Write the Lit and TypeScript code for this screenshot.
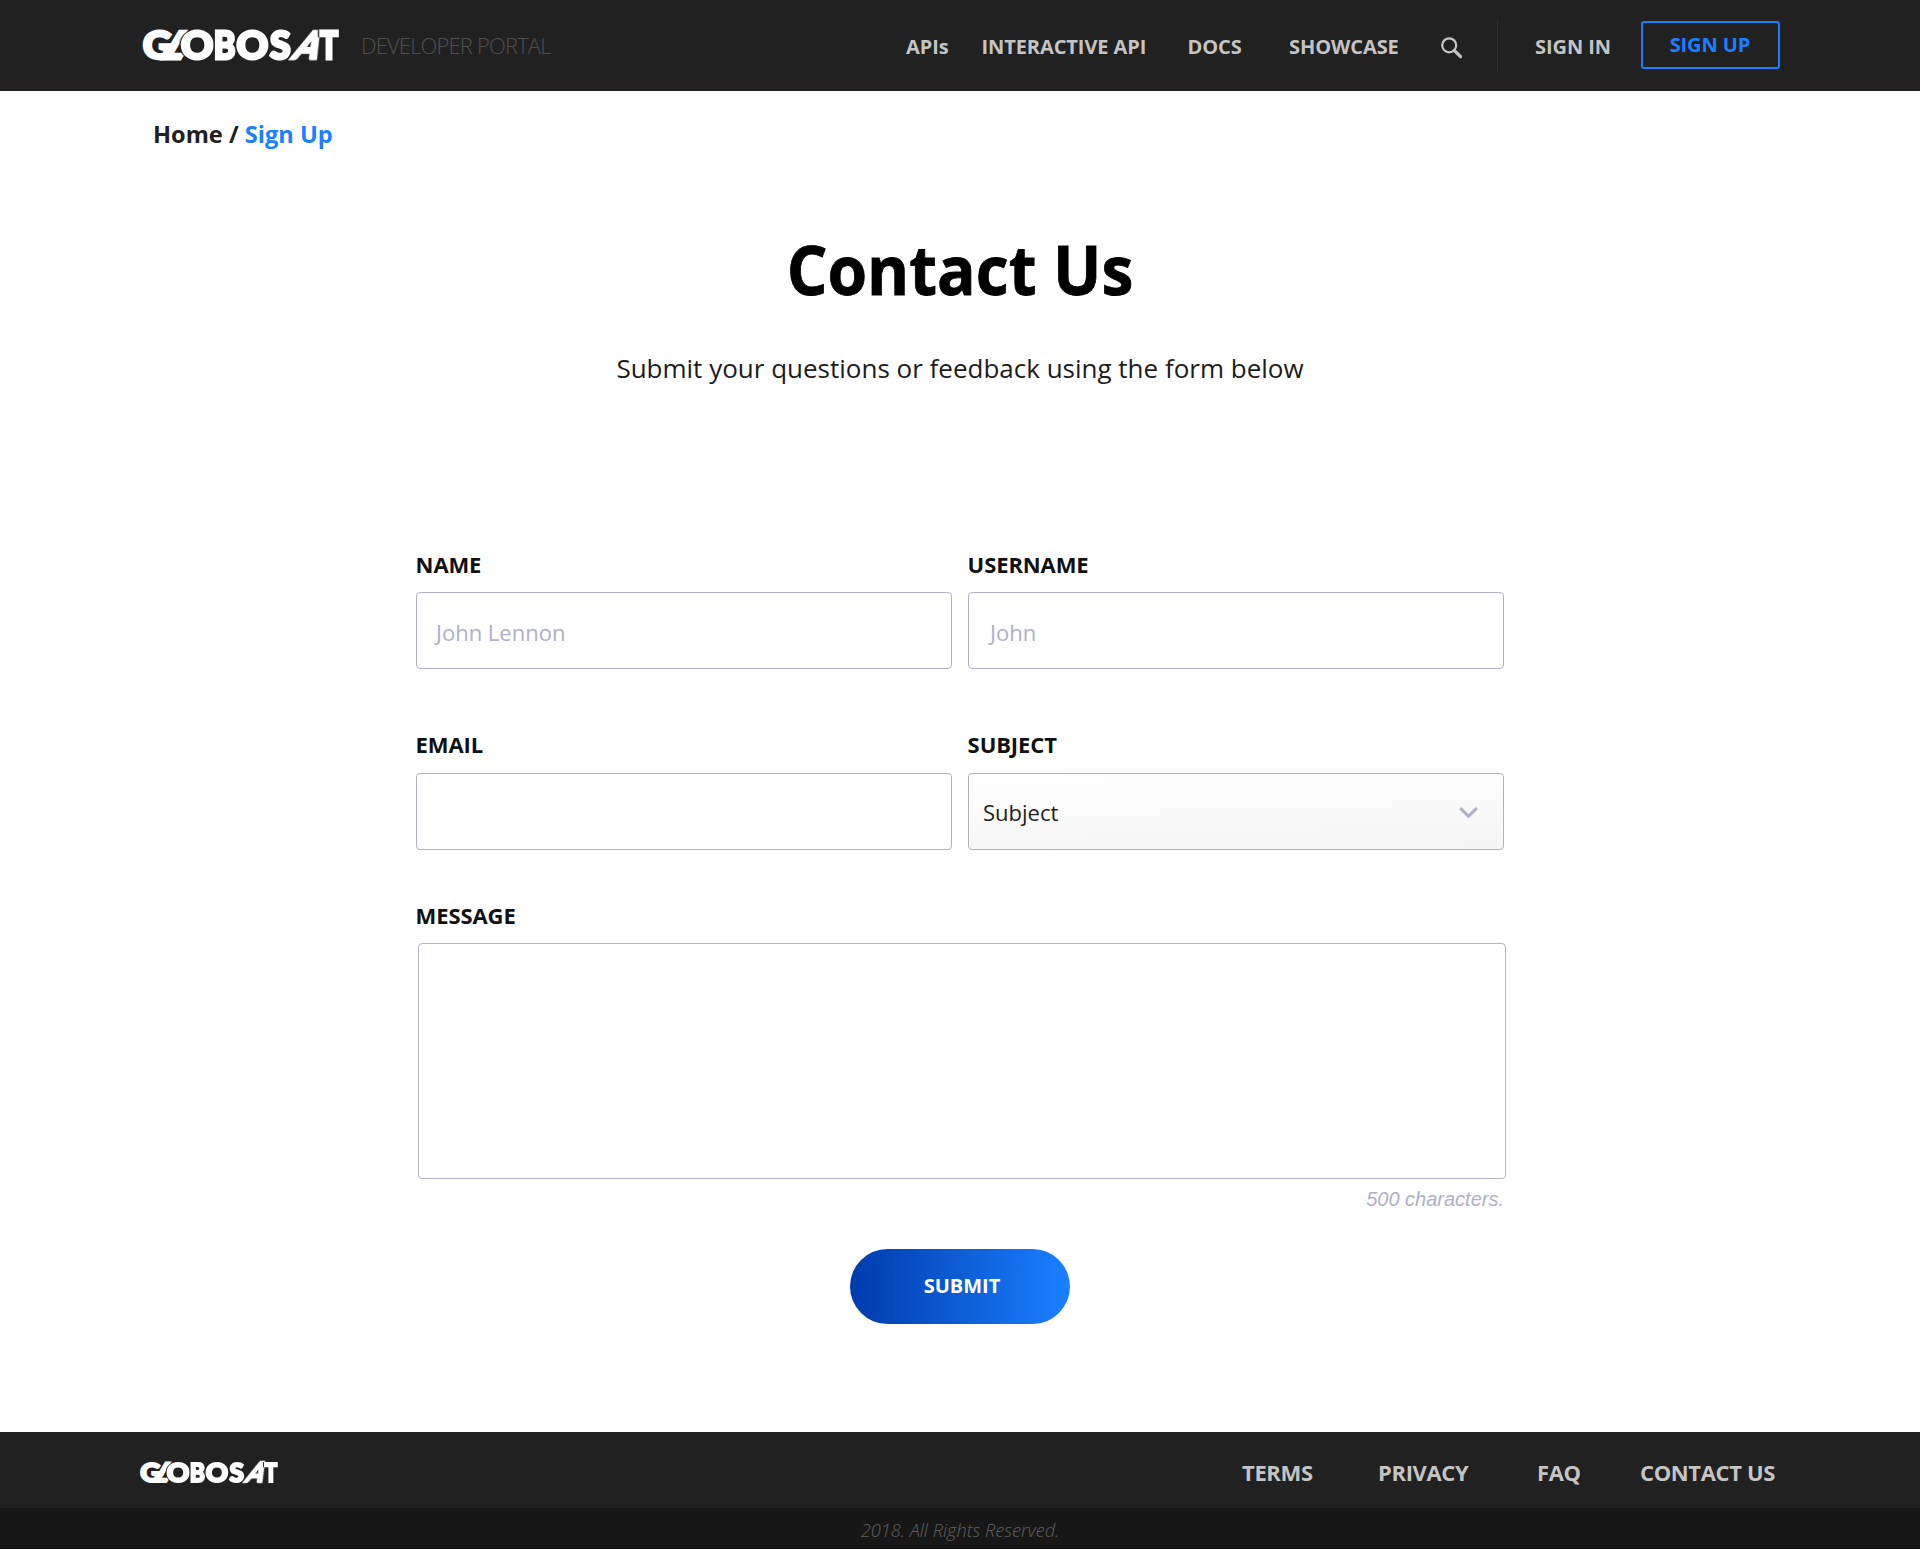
import { LitElement, html, css } from "lit";
import { customElement, property } from "lit/decorators.js";

@customElement("brand-logo")
class BrandLogo extends LitElement {
  static styles = css`
    :host { display: block; line-height: 0; }
    svg { display: block; width: 100%; overflow: visible; }
    text {
      font: 900 115px Lato, sans-serif;
      fill: #fff;
      stroke: #fff;
      stroke-width: 9px;
      filter: drop-shadow(-3.5px 0 0 #212121);
    }
    .joined { filter: none; }
  `;
  render() {
    return html`
      <svg viewBox="0 0 588 96" role="img" aria-label="GLOBOSAT">
        <text class="joined" x="0.4" y="89" textLength="86.8" lengthAdjust="spacingAndGlyphs">G</text>
        <text class="joined" transform="translate(50 89) skewX(-31)" textLength="63" lengthAdjust="spacingAndGlyphs">L</text>
        <text x="114.4" y="89" textLength="97.3" lengthAdjust="spacingAndGlyphs">O</text>
        <text x="212" y="89" textLength="65.1" lengthAdjust="spacingAndGlyphs">B</text>
        <text x="280.5" y="89" textLength="95.1" lengthAdjust="spacingAndGlyphs">O</text>
        <text x="381" y="89" textLength="61.6" lengthAdjust="spacingAndGlyphs">S</text>
        <text transform="translate(444 89) skewX(-25)" textLength="73" lengthAdjust="spacingAndGlyphs">A</text>
        <text x="531" y="89" textLength="54.2" lengthAdjust="spacingAndGlyphs">T</text>
      </svg>`;
  }
}

@customElement("form-field")
class FormField extends LitElement {
  @property() label = "";
  static styles = css`
    :host { display: block; }
    .label {
      font: bold 22px/30px "Open Sans", sans-serif;
      letter-spacing: -0.1px;
      color: #111;
      margin: 0 0 13px -0.4px;
    }
  `;
  render() {
    return html`<div class="label">${this.label}</div><slot></slot>`;
  }
}

@customElement("app-root")
class AppRoot extends LitElement {
  static styles = css`
    :host {
      display: block;
      font-family: "Open Sans", "Noto Sans", sans-serif;
      color: #111;
    }
    * { box-sizing: border-box; }
    .page {
      display: flex;
      flex-direction: column;
      height: 1549px;
      overflow: hidden;
      background: #fff;
    }
    .header {
      display: flex;
      align-items: center;
      justify-content: space-between;
      height: 91px;
      flex: none;
      padding: 0 140px 0 143px;
      background: #212121;
      border-bottom: 1px solid #201c1d;
    }
    .brand { display: flex; align-items: center; }
    .brand brand-logo { width: 196px; }
    .portal {
      padding-bottom: 1px;
      margin: 0 0 0 22px;
      font-size: 22px;
      font-weight: 300;
      line-height: 30px;
      letter-spacing: -0.85px;
      color: #505050;
      white-space: nowrap;
    }
    .nav {
      display: grid;
      grid-template-columns: 75.5px 206px 101.5px 152px 56px 38px 106px 139px;
      align-items: center;
      font-size: 20px;
      font-weight: bold;
      line-height: 28px;
      letter-spacing: -0.08px;
      color: #c4c4c4;
      white-space: nowrap;
    }
    .nav span { padding-top: 4px; }
    .search { display: block; width: 22px; height: 22px; margin-top: 5px; }
    .divider { width: 1px; height: 52px; margin-top: 2px; background: #303030; }
    .nav .signup {
      display: flex;
      align-items: center;
      justify-content: center;
      height: 48px;
      padding: 0 1px 1px 0;
      border: 2px solid #1a80ff;
      border-radius: 3px;
      color: #1a80ff;
    }
    .crumbs {
      margin: 27px 0 0 153px;
      font-size: 23.6px;
      font-weight: bold;
      line-height: 32px;
      color: #212121;
    }
    .crumbs .here { color: #1a80ff; }
    .title {
      margin: 79px 0 0;
      font-size: 68px;
      font-weight: bold;
      line-height: 80px;
      text-align: center;
      color: #000;
      -webkit-text-stroke: 0.8px #000;
      transform: scaleX(0.942);
    }
    .subtitle {
      margin: 41px 0 0;
      font-size: 26px;
      line-height: 36px;
      text-align: center;
      color: #1c1c1c;
    }
    .form { width: 1090px; margin: 163px 0 0 416px; }
    .row {
      display: grid;
      grid-template-columns: 536px 536px;
      column-gap: 16px;
      margin-bottom: 60px;
    }
    .row.second {
      margin-bottom: 50px;
    }
    .row.second .box { margin-top: 14px; }
    .box {
      display: flex;
      align-items: center;
      height: 77px;
      padding: 2px 0 0 19px;
      border: 1px solid #aeb0c8;
      border-radius: 4px;
      font-size: 22px;
      line-height: 30px;
      color: #aeb0c8;
    }
    .box.inset { padding-left: 21px; }
    .box.select {
      justify-content: space-between;
      padding: 1px 25px 0 14px;
      background: linear-gradient(178deg, #fff, #f4f4f5);
      color: #1f1f1f;
    }
    .chevron { display: block; width: 19px; height: 11px; margin-top: 1px; }
    .area {
      height: 236px;
      margin-left: 2px;
      border: 1px solid #b4b5cb;
      border-radius: 4px;
    }
    .count {
      margin-top: 8px;
      padding-right: 2px;
      font: italic 20px/24px "Liberation Sans", sans-serif;
      text-align: right;
      color: #aeb0c8;
    }
    .submit {
      display: flex;
      align-items: center;
      justify-content: center;
      width: 220px;
      height: 75px;
      margin: 38px auto 0;
      padding: 0 0 2px 4px;
      border-radius: 38px;
      background: linear-gradient(90deg, #003bad, #1a80ff);
      font-size: 20px;
      font-weight: bold;
      color: #fff;
    }
    .footer {
      display: flex;
      align-items: center;
      justify-content: space-between;
      height: 76px;
      flex: none;
      margin-top: auto;
      padding: 5px 0 0 140px;
      background: #212121;
    }
    .footer brand-logo { width: 138px; }
    .links {
      display: grid;
      grid-template-columns: 136px 159px 103px 280px;
      margin-top: -1px;
      font-size: 22px;
      font-weight: bold;
      line-height: 30px;
      letter-spacing: -0.35px;
      color: #c4c4c4;
    }
    .legal {
      flex: none;
      height: 41px;
      padding-top: 10px;
      background: #171717;
      border-bottom: 1px solid #0c0c0c;
      font-size: 18.2px;
      font-style: italic;
      font-weight: 300;
      line-height: 24px;
      text-align: center;
      color: #626262;
    }
  `;

  render() {
    return html`
      <div class="page">
        <header class="header">
          <div class="brand">
            <brand-logo></brand-logo>
            <div class="portal">DEVELOPER PORTAL</div>
          </div>
          <nav class="nav">
            <span>APIs</span><span>INTERACTIVE API</span><span>DOCS</span><span>SHOWCASE</span>
            <svg class="search" viewBox="0 0 22 22" fill="none" stroke="#c4c4c4">
              <circle cx="8.2" cy="8.3" r="7" stroke-width="2.2" />
              <path d="M13.2 13.3 L19.6 19.7" stroke-width="3.2" stroke-linecap="round" />
            </svg>
            <div class="divider"></div>
            <span>SIGN IN</span>
            <div class="signup">SIGN UP</div>
          </nav>
        </header>
        <div class="crumbs">Home / <span class="here">Sign Up</span></div>
        <h1 class="title">Contact Us</h1>
        <p class="subtitle">Submit your questions or feedback using the form below</p>
        <div class="form">
          <div class="row">
            <form-field label="NAME"><div class="box">John Lennon</div></form-field>
            <form-field label="USERNAME"><div class="box inset">John</div></form-field>
          </div>
          <div class="row second">
            <form-field label="EMAIL"><div class="box"></div></form-field>
            <form-field label="SUBJECT">
              <div class="box select">
                Subject
                <svg class="chevron" viewBox="0 0 19 11" fill="none" stroke="#aeb0c8">
                  <path d="M1.2 1.2 L9.5 9.2 L17.8 1.2" stroke-width="3" />
                </svg>
              </div>
            </form-field>
          </div>
          <form-field label="MESSAGE"><div class="area"></div></form-field>
          <div class="count">500 characters.</div>
        </div>
        <div class="submit">SUBMIT</div>
        <footer class="footer">
          <brand-logo></brand-logo>
          <div class="links">
            <span>TERMS</span><span>PRIVACY</span><span>FAQ</span><span>CONTACT US</span>
          </div>
        </footer>
        <div class="legal">2018. All Rights Reserved.</div>
      </div>`;
  }
}
